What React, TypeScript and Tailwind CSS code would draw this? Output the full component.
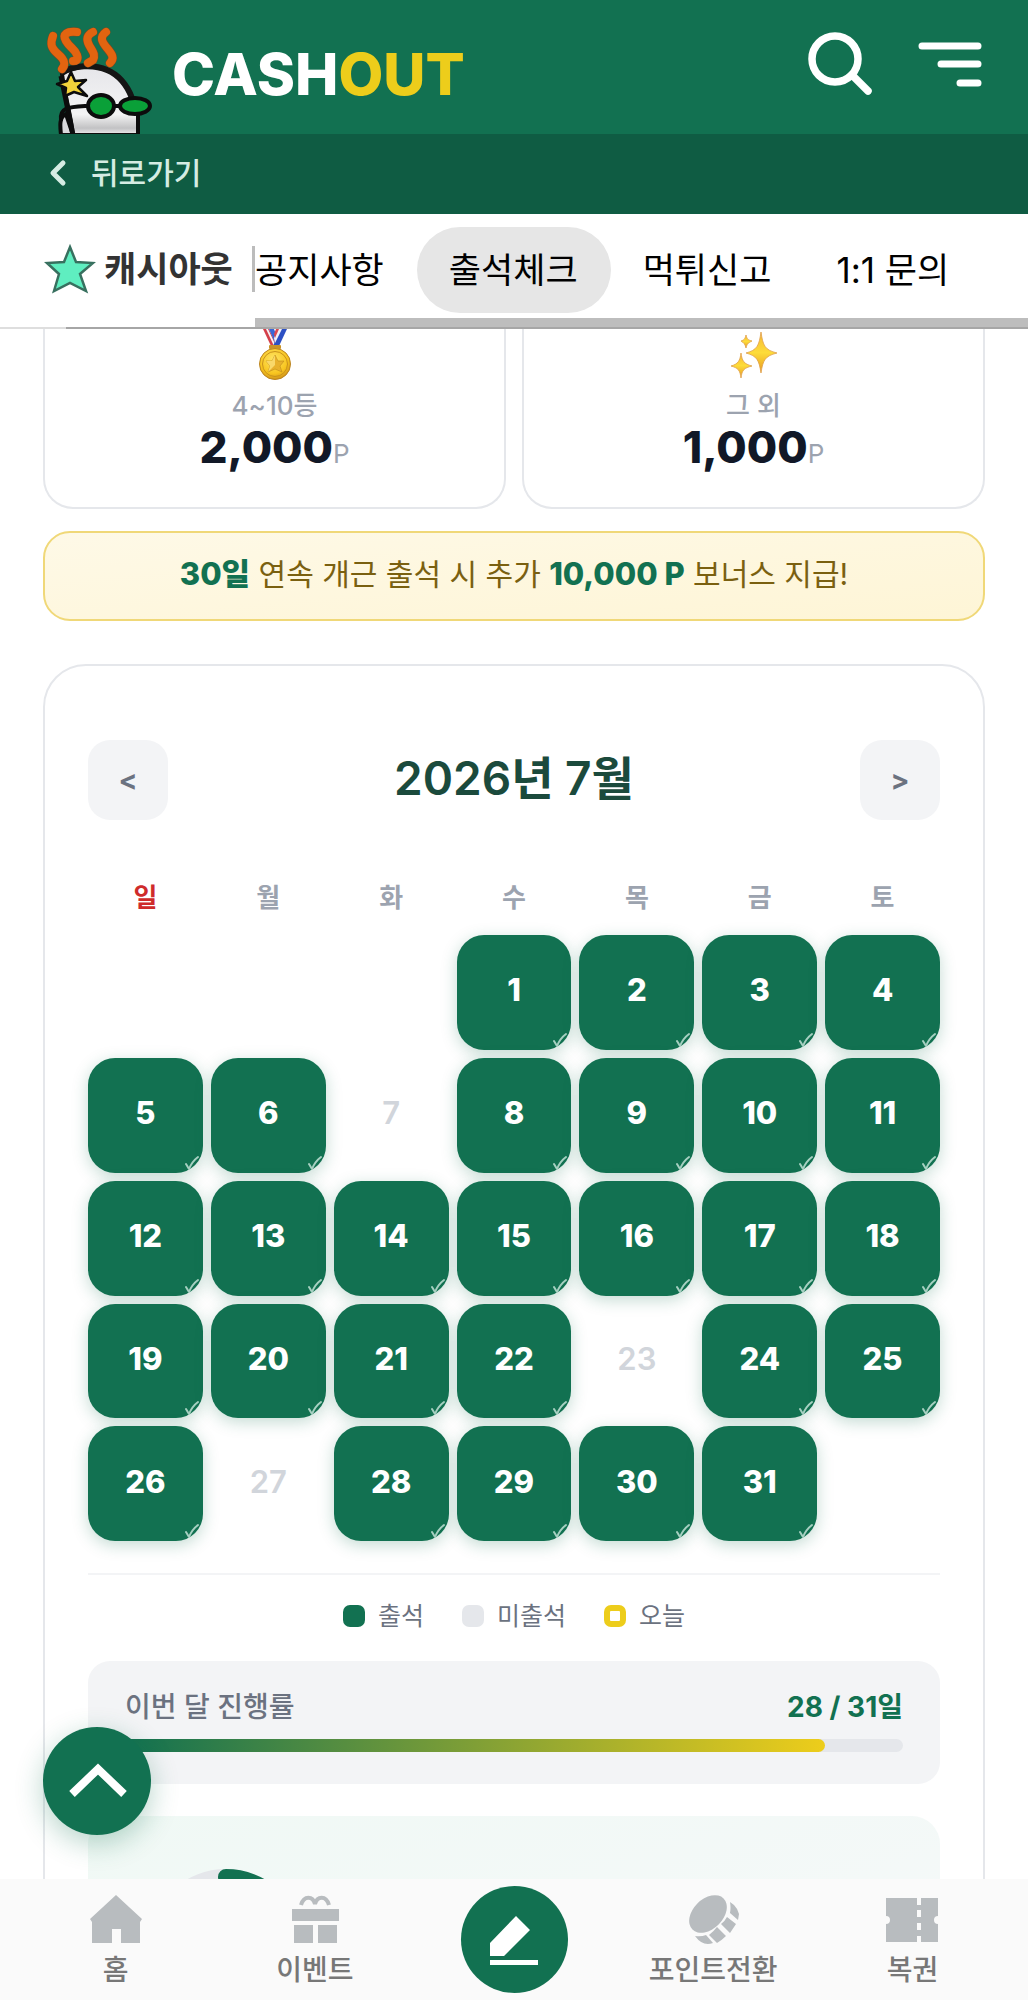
import { clsx } from 'clsx'

const WEEKDAYS = ['일', '월', '화', '수', '목', '금', '토']
const FIRST_WEEKDAY = 3
const DAYS_IN_MONTH = 31
const MISSED_DAYS = [7, 23, 27]

const TABS = ['공지사항', '출석체크', '먹튀신고', '1:1 문의']

const HAIR = [
  'M7 10C4 18 5 22 12 28s8 10 4 15',
  'M31 6c-10-1-15 2-11 9s9 8 11 14-2 6-4 6',
  'M47 6c-6 3-7 7-4 13s7 9 4 15l-5 3',
  'M60 6c-7 5-4 10 1 16s8 10 3 15',
]

function Mascot() {
  return (
    <svg viewBox="0 0 108 108" className="h-[108px] w-[108px] self-end" aria-hidden="true">
      <defs>
        <linearGradient id="skin" x1="0" y1="0" x2="0" y2="1">
          <stop offset="0" stopColor="#e6e6ea" />
          <stop offset="0.7" stopColor="#f4f4f4" />
          <stop offset="0.9" stopColor="#c2c2c4" />
          <stop offset="1" stopColor="#f0f0f0" />
        </linearGradient>
      </defs>
      <path d="M20 88c-7 3-6 12-5 21h12z" fill="#d9d9dc" stroke="#0c0c0c" strokeWidth="4" />
      <path
        d="M16 48C32 38 52 39 63 45c14 8 22 21 24 32l5 12v20H27C25 90 19 70 16 48z"
        fill="url(#skin)"
        stroke="#0c0c0c"
        strokeWidth="4"
      />
      <path d="M14 47c14-8 34-9 47-3 12 5 20 15 25 28" fill="none" stroke="#151515" strokeWidth="6" />
      <g fill="none" strokeLinecap="round">
        {HAIR.map((d) => (
          <path key={d} d={d} stroke="#7a4a20" strokeWidth="9" />
        ))}
        {HAIR.map((d) => (
          <path key={d} d={d} stroke="#e26410" strokeWidth="8" />
        ))}
      </g>
      <path d="M15 50l12 59" stroke="#0c0c0c" strokeWidth="5" />
      <path d="M15 95c-2-14 8-14 26-15M66 80h10" fill="none" stroke="#0c0c0c" strokeWidth="4" />
      <ellipse cx="55" cy="80" rx="13" ry="11" fill="#0aa038" stroke="#0c0c0c" strokeWidth="4" />
      <ellipse cx="89" cy="80" rx="15" ry="8" fill="#0aa038" stroke="#0c0c0c" strokeWidth="4" />
      <path
        d="M25 46l4 9 11-1-8 7 9 9-13-4-9 4 1-8-9-4 10-3z"
        fill="#f2d23a"
        stroke="#0c0c0c"
        strokeWidth="2.5"
        strokeLinejoin="round"
      />
    </svg>
  )
}

function Header() {
  return (
    <header className="shrink-0">
      <div className="flex h-[134px] items-center bg-[#127151] px-[46px]">
        <Mascot />
        <h1 className="ml-[18px] flex-1 pt-3.5 text-[58px] leading-none font-extrabold text-white">
          CASH<span className="text-[#edcd1b]">OUT</span>
        </h1>
        <div className="flex items-center gap-[46px] pb-1.5">
          <button type="button" aria-label="검색">
            <svg viewBox="0 0 64 64" className="size-16" fill="none" stroke="#fff" strokeWidth="7.5" strokeLinecap="round">
              <circle cx="27" cy="27" r="23" />
              <path d="M44 43l16 16" />
            </svg>
          </button>
          <button type="button" aria-label="메뉴">
            <svg viewBox="0 0 64 64" className="size-16" fill="none" stroke="#fff" strokeWidth="7" strokeLinecap="round">
              <path d="M4 14h56M23 32h37M42 51h18" />
            </svg>
          </button>
        </div>
      </div>
      <div className="flex h-20 items-center bg-[#0f5c43] pb-0.5 pl-[49px]">
        <a href="#" className="flex items-center text-[30px] leading-10 font-medium text-[#d5ece3]">
          <svg viewBox="0 0 20 28" className="mr-[22px] h-7 w-5" fill="none" stroke="currentColor" strokeWidth="5" strokeLinecap="round" strokeLinejoin="round">
            <path d="M14 4L4 14l10 10" />
          </svg>
          뒤로가기
        </a>
      </div>
    </header>
  )
}

function TabBar() {
  return (
    <nav className="shrink-0 bg-white">
      <div className="flex h-[113px]">
        <div className="flex w-[255px] shrink-0 items-center justify-between pb-1 pl-11">
          <span className="flex items-center gap-2 text-[35px] leading-[46px] font-bold text-[#333]">
            <svg viewBox="0 0 52 52" className="size-[52px]">
              <path d="M26 4l6 15 17 1-13 11 6 17-16-8-16 8 5-17L3 20l17-1z" fill="#5feec0" stroke="#38705f" strokeWidth="2.5" />
            </svg>
            캐시아웃
          </span>
          <span className="h-[46px] w-[3px] bg-[#bcbcbc]" />
        </div>
        <div className="flex min-w-0 flex-1 flex-col justify-between">
          <div className="flex overflow-hidden pt-[13px]">
            {TABS.map((tab, i) => (
              <a
                key={tab}
                href="#"
                className={clsx(
                  'flex h-[86px] shrink-0 items-center rounded-full pr-[33px] text-[35px] text-black',
                  i > 0 && 'pl-8',
                  tab === '출석체크' && 'bg-[#e6e6e6]',
                )}
              >
                {tab}
              </a>
            ))}
          </div>
          <div className="h-[9px] bg-[#bdbdbd]" />
        </div>
      </div>
      <div className="flex h-0.5">
        <div className="w-[66px] bg-[#dedede]" />
        <div className="flex-1 bg-[#a6a6a6]" />
      </div>
    </nav>
  )
}

function Medal() {
  return (
    <svg viewBox="0 0 48 54" className="h-[54px] w-12" aria-hidden="true">
      <defs>
        <radialGradient id="coin" cx="0.45" cy="0.35" r="0.7">
          <stop offset="0" stopColor="#ffe566" />
          <stop offset="0.65" stopColor="#f8c51f" />
          <stop offset="1" stopColor="#c98a16" />
        </radialGradient>
      </defs>
      <path d="M12 0h6l8 17h-6z" fill="#d4404a" />
      <path d="M15 0h2l8 17h-2z" fill="#f5f5fa" />
      <path d="M18 0h5l3 8-2 6z" fill="#3a66d6" />
      <path d="M30 0h6l-8 17h-6z" fill="#2c50c4" />
      <path d="M27 0h4l-7 14-1-5z" fill="#f0f0f8" />
      <path d="M25 0h3l-4 9-1-4z" fill="#dc4850" />
      <rect x="18" y="16" width="12" height="4" rx="1" fill="#c99328" />
      <circle cx="24" cy="35" r="15.5" fill="url(#coin)" stroke="#ba8424" strokeWidth="1" />
      <circle cx="24" cy="35" r="12.5" fill="none" stroke="#c9921c" strokeWidth="1" />
      <path d="M24 26l3 6h6l-4 5 2 6-7-3-7 3 2-6-4-5h6z" fill="#e8b12c" stroke="#c08c1a" strokeWidth="0.6" />
      <path d="M24 26v10l-7 7 2-6-4-5h6z" fill="#f9d86a" />
    </svg>
  )
}

function Sparkles() {
  return (
    <svg viewBox="0 0 48 54" className="h-[54px] w-12" aria-hidden="true">
      <defs>
        <linearGradient id="spark" x1="0" y1="0" x2="0" y2="1">
          <stop offset="0" stopColor="#f6b733" />
          <stop offset="0.5" stopColor="#fddc3a" />
          <stop offset="1" stopColor="#e89a20" />
        </linearGradient>
      </defs>
      <g fill="url(#spark)" stroke="#e0a04a" strokeWidth="0.8">
        <path d="M31 3c2 14 4 18 16 21-12 3-14 7-16 20-2-13-4-17-15-20 11-3 13-7 15-21z" />
        <path d="M11 24c1 8 3 11 11 13-8 2-10 4-11 12-1-8-3-10-10-12 7-2 9-5 10-13z" />
        <path d="M16 6c1 4 2 5 6 6-4 2-5 3-6 7-1-4-2-5-5-7 3-1 4-2 5-6z" />
      </g>
    </svg>
  )
}

interface RewardCardProps {
  icon: React.ReactNode
  label: string
  points: string
}

function RewardCard({ icon, label, points }: RewardCardProps) {
  return (
    <div className="flex flex-col items-center rounded-b-[30px] border-2 border-t-0 border-[#e5e7eb] pb-[30px]">
      {icon}
      <p className="mt-[5px] text-[26px] leading-9 font-medium text-[#9ca3af]">{label}</p>
      <p className="text-[44px] leading-[46px] font-extrabold text-[#111827]">
        {points}
        <span className="text-[26px] font-normal text-[#9ca3af]">P</span>
      </p>
    </div>
  )
}

function DayCell({ day }: { day: number }) {
  if (MISSED_DAYS.includes(day)) {
    return (
      <div className="flex aspect-square items-center justify-center pb-1 text-[31px] font-semibold text-[#d1d5db]">
        {day}
      </div>
    )
  }
  return (
    <div className="relative flex aspect-square items-center justify-center overflow-hidden rounded-[27px] bg-[#127151] pb-1 text-[31px] font-extrabold text-white shadow-[0_4px_16px_rgba(18,113,81,0.25)]">
      {day}
      <svg viewBox="0 0 14 18" className="absolute right-1 bottom-0 h-[18px] w-3.5" fill="none" stroke="#a6d0c1" strokeWidth="2" strokeLinecap="round">
        <path d="M1 9l3 5C6 9 9 5 13 2" />
      </svg>
    </div>
  )
}

function MonthButton({ label, children }: { label: string; children: string }) {
  return (
    <button
      type="button"
      aria-label={label}
      className="size-20 rounded-[22px] bg-[#f3f4f6] text-[28px] font-bold text-[#6b7280]"
    >
      {children}
    </button>
  )
}

function Calendar() {
  const days = Array.from({ length: DAYS_IN_MONTH }, (_, i) => i + 1)
  const attended = DAYS_IN_MONTH - MISSED_DAYS.length
  const percent = Math.round((attended / DAYS_IN_MONTH) * 100)

  return (
    <section className="mt-[43px] rounded-[43px] border-2 border-[#e5e7eb] px-[43px] pt-[74px] pb-[43px]">
      <div className="flex items-center justify-between">
        <MonthButton label="이전 달">&lt;</MonthButton>
        <h2 className="pb-1 text-[46px] leading-[60px] font-semibold text-[#1b4a3c]">2026년 7월</h2>
        <MonthButton label="다음 달">&gt;</MonthButton>
      </div>

      <div className="mt-[60px] grid grid-cols-7 gap-2 text-center text-[26px] leading-9 font-semibold">
        {WEEKDAYS.map((name, i) => (
          <div key={name} className={i === 0 ? 'text-[#cf2b2b]' : 'text-[#9ca3af]'}>
            {name}
          </div>
        ))}
      </div>
      <div className="mt-[19px] grid grid-cols-7 gap-2">
        {Array.from({ length: FIRST_WEEKDAY }, (_, i) => (
          <div key={`blank-${i}`} />
        ))}
        {days.map((day) => (
          <DayCell key={day} day={day} />
        ))}
      </div>

      <ul className="mt-8 flex items-center justify-center gap-[38px] border-t-2 border-[#f3f4f6] pt-[23px] text-[25px] leading-9 text-[#6b7280]">
        <li className="flex items-center gap-[13px]">
          <span className="size-[22px] rounded-[7px] bg-[#127151]" />
          출석
        </li>
        <li className="flex items-center gap-[13px]">
          <span className="size-[22px] rounded-[7px] bg-[#e5e7eb]" />
          미출석
        </li>
        <li className="flex items-center gap-[13px]">
          <span className="size-[22px] rounded-[7px] border-[6px] border-[#edcd1b] bg-white" />
          오늘
        </li>
      </ul>

      <div className="mt-[27px] rounded-[22px] bg-[#f3f4f6] px-[37px] pt-7 pb-8">
        <div className="flex items-center justify-between text-[28px] leading-9">
          <span className="font-medium text-[#6b7280]">이번 달 진행률</span>
          <span className="font-bold text-[#127151]">
            {attended} / {DAYS_IN_MONTH}일
          </span>
        </div>
        <div className="mt-3.5 h-[13px] overflow-hidden rounded-full bg-[#e5e7eb]">
          <div
            className="h-full rounded-full bg-linear-to-r/srgb from-[#127151] to-[#edcd1b]"
            style={{ width: `${percent}%` }}
          />
        </div>
      </div>

      <div className="mt-8 rounded-[28px] bg-linear-to-br/srgb from-[#f0f9f5] to-[#f7f9fa] px-[60px] py-[53px]">
        <svg viewBox="0 0 156 156" className="size-[156px]" fill="none" strokeWidth="16" strokeLinecap="round">
          <circle cx="78" cy="78" r="70" stroke="#e5e7eb" />
          <circle cx="78" cy="78" r="70" stroke="#127151" pathLength="100" strokeDasharray={`${percent} 100`} transform="rotate(-90 78 78)" />
        </svg>
      </div>
    </section>
  )
}

function HomeIcon() {
  return (
    <svg viewBox="0 -2 54 54" className="size-[54px]" fill="#b8bcbf">
      <path d="M27 1l26 24-2 3v21H32V35h-9v14H3V28l-2-3z" />
    </svg>
  )
}

function GiftIcon() {
  return (
    <svg viewBox="0 -2 54 54" className="size-[54px]" fill="#b8bcbf">
      <path d="M13 11C16 1 25 2 27 10c2-8 11-9 14 1" fill="none" stroke="#b8bcbf" strokeWidth="4" />
      <path d="M4 15h47v12H4zM6 31h19v18H6zM30 31h19v18H30z" />
    </svg>
  )
}

function CoinIcon() {
  return (
    <svg viewBox="0 0 54 54" className="size-[54px]" fill="#b8bcbf">
      <ellipse cx="22" cy="22" rx="22" ry="15" transform="rotate(-45 22 22)" />
      <path d="M44 10l4 3q4 4 5 9l-1 6-8-7q1-5 0-11zM41 25l9 7-6 9-9-9q4-3 6-7zM31 35l9 9q-4 4-9 7l-8-8q5-4 8-8zM9 44q6 1 11-1l7 8q-10 4-18-7z" />
    </svg>
  )
}

function TicketIcon() {
  return (
    <svg viewBox="0 0 54 54" className="size-[54px]" fill="#b8bcbf">
      <path d="M1 6h31v7h4V6h17v18a4 4 0 0 0 0 8v18H36v-6h-4v6H1V32a4 4 0 0 0 0-8z" />
      <path d="M32 18h4v7h-4zM32 31h4v7h-4z" fill="#fafafa" />
    </svg>
  )
}

function NavItem({ icon, label }: { icon: React.ReactNode; label: string }) {
  return (
    <a href="#" className="flex flex-1 flex-col items-center gap-1.5 text-[28px] leading-9 font-medium text-[#777]">
      {icon}
      {label}
    </a>
  )
}

function BottomNav() {
  return (
    <nav className="flex shrink-0 items-center bg-[#fafafa] px-4 py-[7px]">
      <NavItem icon={<HomeIcon />} label="홈" />
      <NavItem icon={<GiftIcon />} label="이벤트" />
      <div className="flex flex-1 justify-center">
        <button type="button" aria-label="글쓰기" className="flex size-[107px] items-center justify-center rounded-full bg-[#127151]">
          <svg viewBox="0 0 54 54" className="size-[54px]" fill="#fff">
            <path d="M3 30L29 3l14 14-26 26H3zM3 47h48v5H3z" />
          </svg>
        </button>
      </div>
      <NavItem icon={<CoinIcon />} label="포인트전환" />
      <NavItem icon={<TicketIcon />} label="복권" />
    </nav>
  )
}

export default function App() {
  return (
    <div className="flex h-screen flex-col bg-white font-['Inter','Noto_Sans_CJK_KR',sans-serif]">
      <Header />
      <TabBar />
      <div className="relative min-h-0 flex-1">
        <main className="h-full overflow-y-auto px-[43px] [scrollbar-width:none]">
          <div className="grid grid-cols-2 gap-4">
            <RewardCard icon={<Medal />} label="4~10등" points="2,000" />
            <RewardCard icon={<Sparkles />} label="그 외" points="1,000" />
          </div>
          <p className="mt-[22px] rounded-[27px] border-2 border-[#f0d878] bg-linear-to-br/srgb from-[#fef9e7] to-[#fef5d6] pt-[18px] pb-[22px] text-center text-[30px] leading-[45px] text-[#7a6010]">
            <strong className="text-[31px] font-extrabold text-[#127151]">30일</strong> 연속 개근 출석 시 추가{' '}
            <strong className="text-[31px] font-extrabold text-[#127151]">10,000 P</strong> 보너스 지급!
          </p>
          <Calendar />
        </main>
        <button
          type="button"
          aria-label="맨 위로"
          className="absolute bottom-11 left-[43px] flex size-[108px] items-center justify-center rounded-full bg-[#127151] shadow-[0_8px_28px_rgba(18,113,81,0.3)]"
        >
          <svg viewBox="0 0 60 40" className="h-10 w-[60px]" fill="none" stroke="#fff" strokeWidth="8">
            <path d="M5 33L31 8l26 25" />
          </svg>
        </button>
      </div>
      <BottomNav />
    </div>
  )
}
